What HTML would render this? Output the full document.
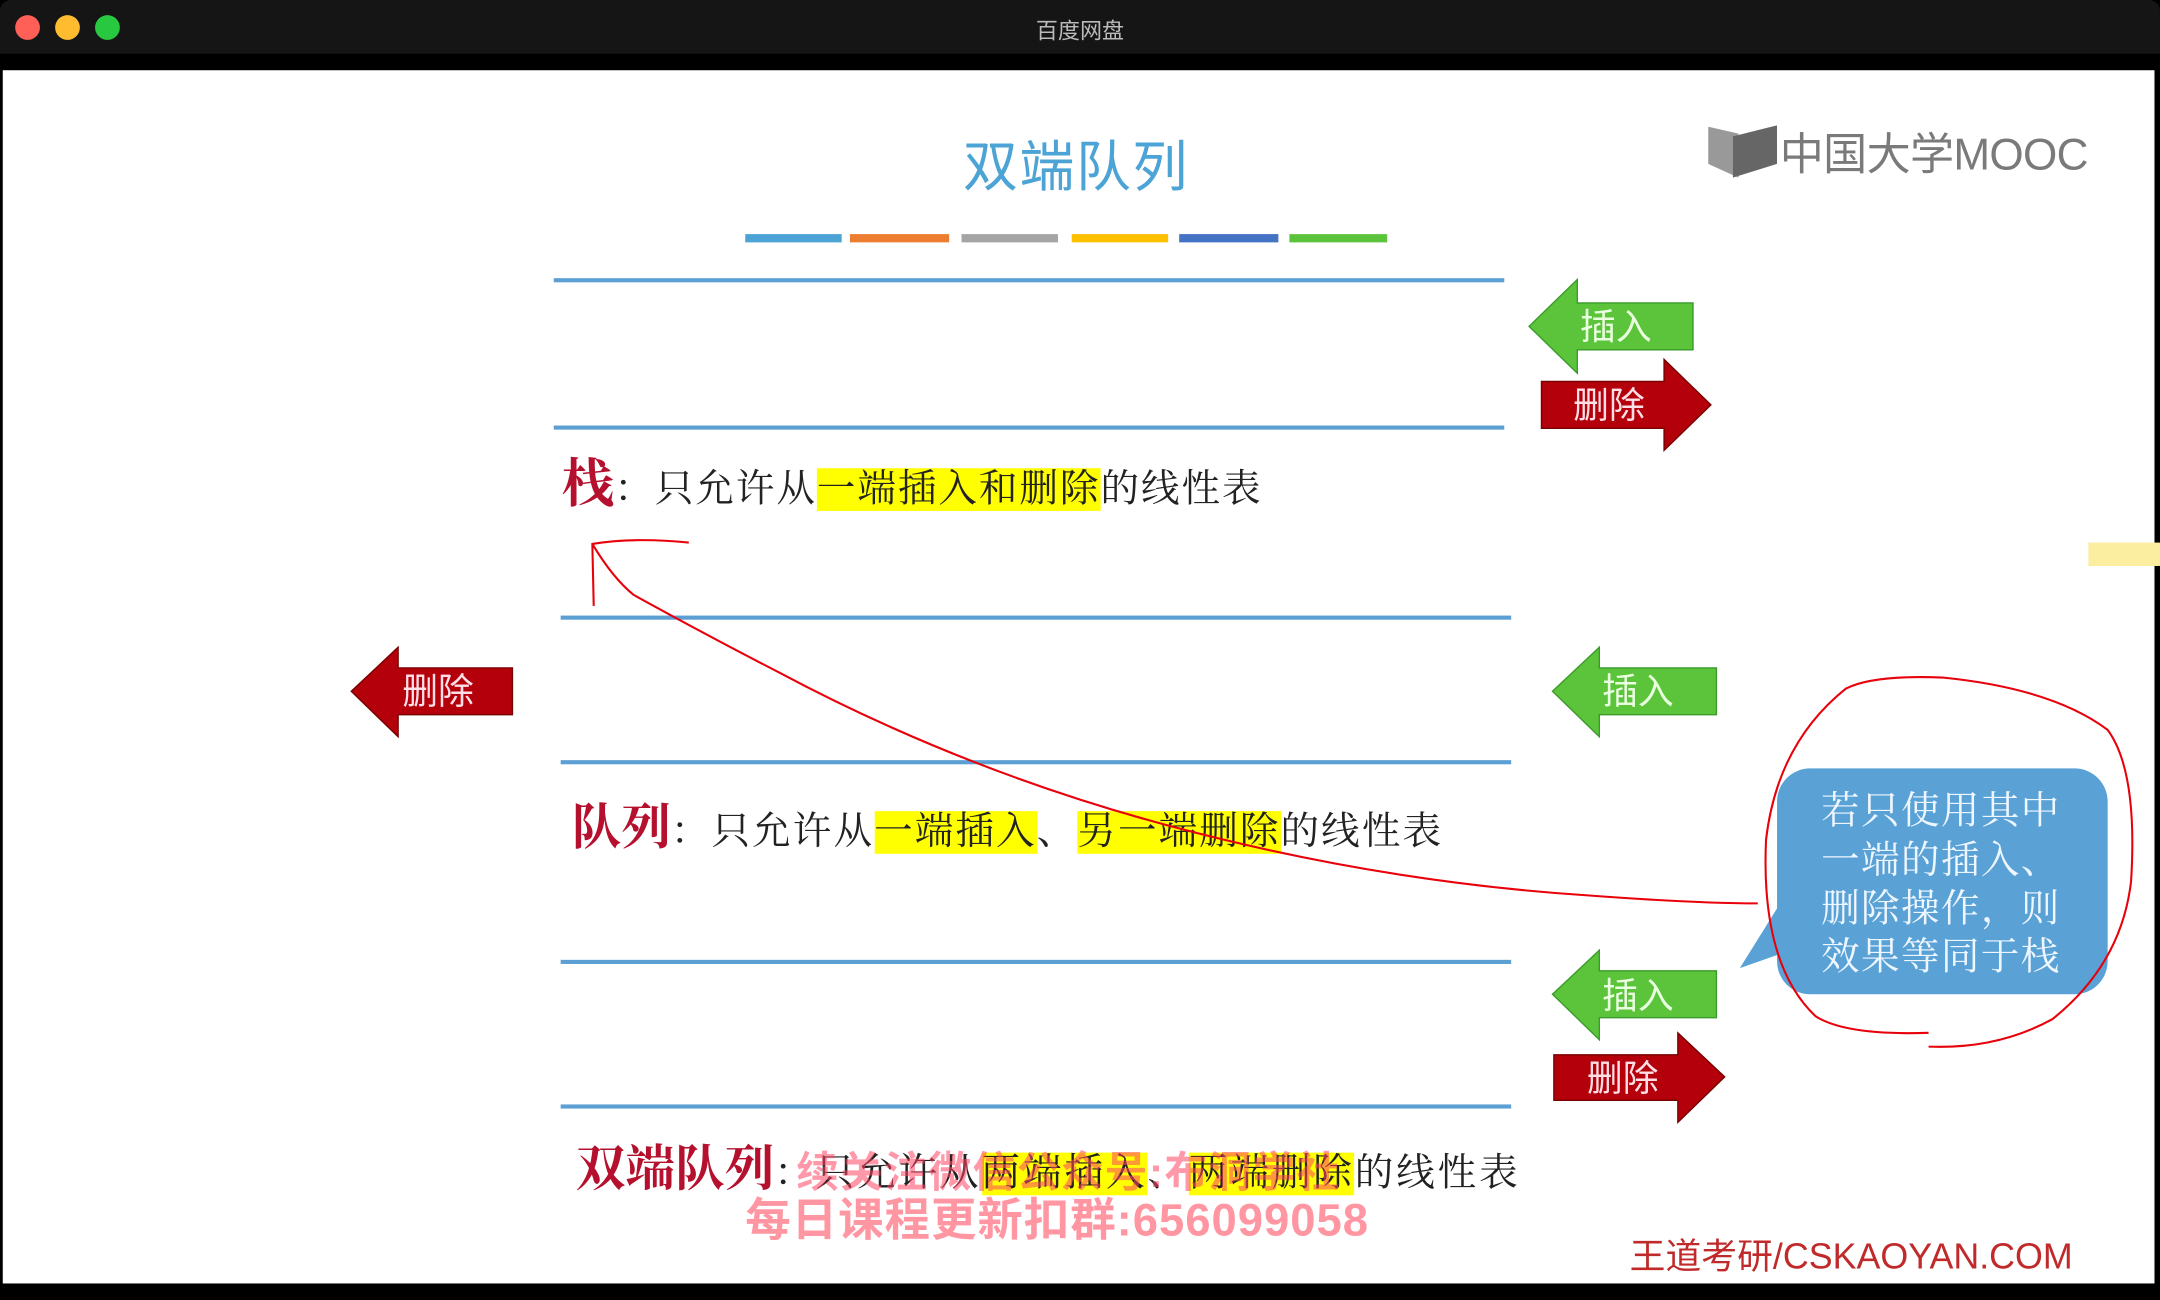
<!DOCTYPE html>
<html><head><meta charset="utf-8"><style>
html,body{margin:0;padding:0;background:#000;overflow:hidden}
#s{position:absolute;left:0;top:0;width:1568px;height:944px;transform:scale(1.37755,1.3771);transform-origin:0 0;background:#000;font-family:"Liberation Serif","Noto Serif CJK SC",serif}
.a{position:absolute;white-space:nowrap}
.hl{background:#ffff00}
.ln{position:absolute;height:3px;background:#5b9fd3}
.cb{position:absolute;top:170px;height:6px}
.t{font-size:28px;color:#222;line-height:36px;letter-spacing:1.4px}
.red{color:#b5102e;font-weight:bold;letter-spacing:0}
</style></head><body><div id="s">
<div class="a" style="left:0;top:0;width:1568px;height:39px;background:#151515;border-radius:8px 8px 0 0"></div>
<div class="a" style="left:11px;top:11px;width:18px;height:18px;border-radius:50%;background:#fe5f57"></div>
<div class="a" style="left:40px;top:11px;width:18px;height:18px;border-radius:50%;background:#febc2e"></div>
<div class="a" style="left:69px;top:11px;width:18px;height:18px;border-radius:50%;background:#28c840"></div>
<div class="a" style="left:0;top:9px;width:1568px;text-align:center;font:16px 'Liberation Sans','Noto Sans CJK SC',sans-serif;color:#bbb">百度网盘</div>
<div class="a" style="left:2px;top:51px;width:1562px;height:881px;background:#fff"></div>
<div class="a" style="left:1516px;top:394px;width:52px;height:17px;background:#fbeea0"></div>

<div class="a" style="left:0;top:97px;width:1562px;text-align:center;font-size:40px;color:#4ba3d6;font-family:'Liberation Sans','Noto Sans CJK SC',sans-serif;line-height:50px;letter-spacing:1px">双端队列</div>
<div class="cb" style="left:541px;width:70px;background:#4ba3d6"></div>
<div class="cb" style="left:617px;width:72px;background:#ed7d31"></div>
<div class="cb" style="left:698px;width:70px;background:#a5a5a5"></div>
<div class="cb" style="left:778px;width:70px;background:#ffc000"></div>
<div class="cb" style="left:856px;width:72px;background:#4472c4"></div>
<div class="cb" style="left:936px;width:71px;background:#5cc33c"></div>

<div class="a" style="left:1240px;top:89px;font-family:'Liberation Sans','Noto Sans CJK SC',sans-serif;font-size:32px;color:#7a7a7a;line-height:44px;letter-spacing:-0.5px"><svg width="50" height="42" style="vertical-align:-8px;margin-right:2px" viewBox="0 0 50 42"><path d="M0 3 L22 8 L22 40 L0 30Z" fill="#999"/><path d="M18 10 L50 2 L50 30 L18 40Z" fill="#666"/></svg>中国大学MOOC</div>

<div class="ln" style="left:402px;top:202px;width:690px"></div>
<div class="ln" style="left:402px;top:309px;width:690px"></div>
<div class="ln" style="left:407px;top:447px;width:690px"></div>
<div class="ln" style="left:407px;top:552px;width:690px"></div>
<div class="ln" style="left:407px;top:697px;width:690px"></div>
<div class="ln" style="left:407px;top:802px;width:690px"></div>

<svg class="a" style="left:0;top:0" width="1568" height="944" font-family="Liberation Sans, Noto Sans CJK SC, sans-serif" font-size="26">
<polygon points="1110,237 1145,203 1145,220 1229,220 1229,254 1145,254 1145,271" fill="#5bc43b" stroke="#3a9a2a"/><text x="1147" y="246" fill="#eaffe0">插入</text>
<polygon points="1242,294 1208,261 1208,277 1119,277 1119,311 1208,311 1208,327" fill="#b3000a" stroke="#700"/><text x="1142" y="303" fill="#ffdfe6">删除</text>
<polygon points="255,502 289,470 289,485 372,485 372,519 289,519 289,535" fill="#b3000a" stroke="#700"/><text x="292" y="511" fill="#ffdfe6">删除</text>
<polygon points="1127,502 1161,470 1161,485 1246,485 1246,519 1161,519 1161,535" fill="#5bc43b" stroke="#3a9a2a"/><text x="1163" y="511" fill="#eaffe0">插入</text>
<polygon points="1127,722 1161,690 1161,705 1246,705 1246,739 1161,739 1161,755" fill="#5bc43b" stroke="#3a9a2a"/><text x="1163" y="732" fill="#eaffe0">插入</text>
<polygon points="1252,782 1218,750 1218,766 1128,766 1128,799 1218,799 1218,815" fill="#b3000a" stroke="#700"/><text x="1152" y="792" fill="#ffdfe6">删除</text>
<rect x="1290" y="558" width="240" height="164" rx="24" fill="#5aa2d6"/>
<path d="M1296,650 L1263,703 L1300,690Z" fill="#5aa2d6"/>
<g fill="#eef6ff" font-size="28" font-family="Liberation Serif, Noto Serif CJK SC, serif" letter-spacing="1"><text x="1322" y="598">若只使用其中</text><text x="1322" y="634">一端的插入、</text><text x="1322" y="669">删除操作，则</text><text x="1322" y="704">效果等同于栈</text></g>
</svg>

<div class="a t" style="left:408px;top:334px"><span class="red" style="font-size:38px">栈</span>：只允许从<span class="hl">一端插入和删除</span>的线性表</div>
<div class="a t" style="left:415px;top:583px;letter-spacing:1.5px"><span class="red" style="font-size:36px">队列</span>：只允许从<span class="hl">一端插入</span>、<span class="hl">另一端删除</span>的线性表</div>
<div class="a t" style="left:418px;top:831px;letter-spacing:2.1px"><span class="red" style="font-size:36px">双端队列</span>：只允许从<span class="hl">两端插入</span>、<span class="hl">两端删除</span>的线性表</div>
<div class="a" style="left:578px;top:826px;font:bold 31px 'Liberation Sans','Noto Sans CJK SC',sans-serif;color:rgba(255,70,100,0.55);letter-spacing:1px">续关注微信公众号:布洞学社</div>
<div class="a" style="left:541px;top:859px;font:bold 33px 'Liberation Sans','Noto Sans CJK SC',sans-serif;color:rgba(255,80,100,0.6);letter-spacing:0.7px">每日课程更新扣群:656099058</div>
<div class="a" style="left:1183px;top:892px;font:26px 'Liberation Sans','Noto Sans CJK SC',sans-serif;color:#c02a2a">王道考研/CSKAOYAN.COM</div>

<svg class="a" style="left:0;top:0" width="1568" height="944" fill="none" stroke="#e8000a" stroke-width="1.5">
<path d="M431,440 L430,395 Q460,390 500,394"/>
<path d="M430,395 Q445,420 460,432 Q520,465 565,488 Q700,560 850,600 Q1000,640 1150,650 Q1230,656 1276,656"/>
<path d="M1400,750 Q1340,752 1318,738 Q1278,700 1282,610 Q1290,540 1340,500 Q1360,490 1410,492 Q1490,500 1530,530 Q1552,560 1547,640 Q1540,700 1490,740 Q1450,762 1400,760"/>
</svg>
</div></body></html>
